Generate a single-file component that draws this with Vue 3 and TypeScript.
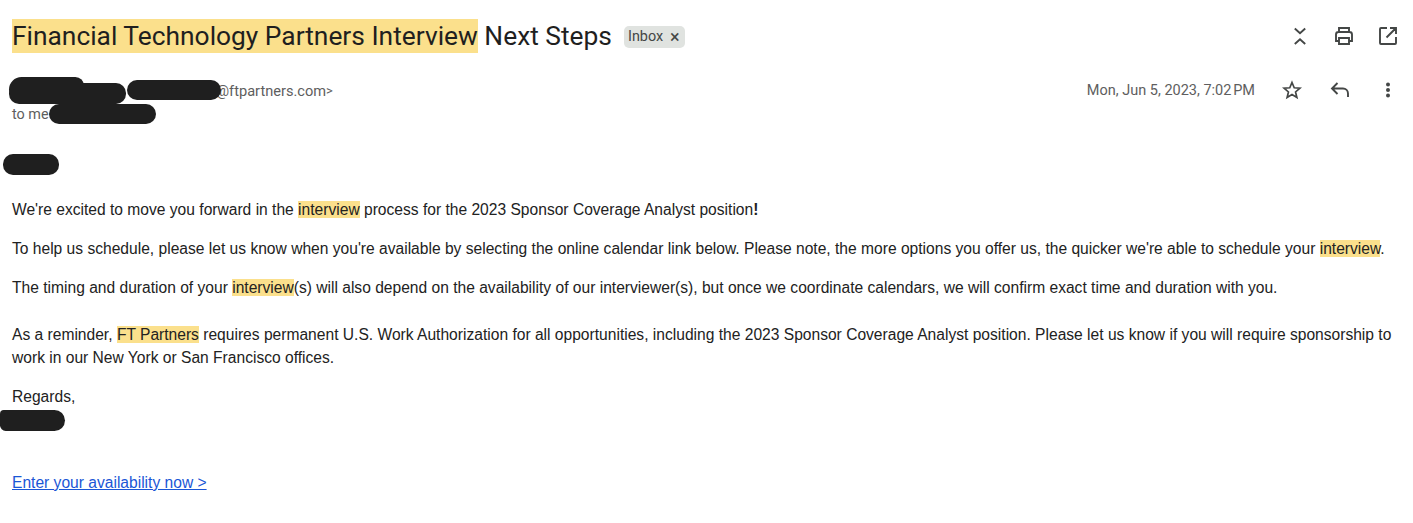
<script setup lang="ts">
const blots = [
  { left: 9, top: 77, width: 75, height: 24, radius: '13px 9px 10px 12px' },
  { left: 9, top: 83, width: 117, height: 21, radius: '10px' },
  { left: 127, top: 80, width: 94, height: 20, radius: '10px' },
  { left: 49, top: 104, width: 107, height: 20, radius: '10px' },
  { left: 3, top: 154, width: 56, height: 21, radius: '10px' },
  { left: 0, top: 410, width: 65, height: 21, radius: '4px 11px 11px 6px' },
];
</script>

<template>
  <div class="page">
    <header class="subject-row">
      <h1 class="subject"><mark class="hl title-hl">Financial Technology Partners Interview</mark> Next Steps</h1>
      <span class="chip">Inbox <span class="chip-x">×</span></span>
      <div class="tools top-tools">
        <svg class="icon" viewBox="0 0 24 24"><path d="M6.800 4.500 12 9.200l5.200-4.700M6.800 20 12 15.300l5.200 4.700" /></svg>
        <svg class="icon" viewBox="0 0 24 24"><path d="M7 8V4h10v4M7 17H4v-6.500A2.500 2.500 0 0 1 6.500 8h11a2.500 2.500 0 0 1 2.500 2.500V17h-3M7 14h10v6H7z" /></svg>
        <svg class="icon" viewBox="0 0 24 24"><path d="M11 4H5a1 1 0 0 0-1 1v14a1 1 0 0 0 1 1h14a1 1 0 0 0 1-1v-6M14 4h6v6M20 4l-9.500 9.500" /></svg>
      </div>
    </header>

    <section class="meta-row">
      <div class="sender">
        <div class="from"><span class="addr">@ftpartners.com</span><span class="gt">&gt;</span></div>
        <div class="to">to me</div>
      </div>
      <time class="date">Mon, Jun 5, 2023, 7:02&#8239;PM</time>
      <div class="tools meta-tools">
        <svg class="icon" viewBox="-1.500 -1.500 27 27"><path d="m12 3.600 2.500 5.900 6.400.5-4.900 4.200 1.500 6.200-5.500-3.300-5.500 3.300L8 14.200 3.100 10l6.400-.5z" /></svg>
        <svg class="icon" viewBox="0 0 24 24"><path d="M9.500 5 4 10.500 9.500 16M4 10.500h11a5 5 0 0 1 5 5V19" /></svg>
        <svg class="icon dots" viewBox="0 0 24 24"><circle cx="12" cy="6.500" r="2" /><circle cx="12" cy="12" r="2" /><circle cx="12" cy="17.500" r="2" /></svg>
      </div>
    </section>

    <main class="body">
      <p>We're excited to move you forward in the <mark class="hl">interview</mark> process for the 2023 Sponsor Coverage Analyst position<b class="bang">!</b></p>
      <p>To help us schedule, please let us know when you're available by selecting the online calendar link below. Please note, the more options you offer us, the quicker we're able to schedule your <mark class="hl">interview</mark>.</p>
      <p>The timing and duration of your <mark class="hl">interview</mark>(s) will also depend on the availability of our interviewer(s), but once we coordinate calendars, we will confirm exact time and duration with you.</p>
      <p class="reminder">As a reminder, <mark class="hl">FT Partners</mark> requires permanent U.S. Work Authorization for all opportunities, including the 2023 Sponsor Coverage Analyst position. Please let us know if you will require sponsorship to work in our New York or San Francisco offices.</p>
      <p class="regards">Regards,</p>
      <a class="cta" href="#">Enter your availability now &gt;</a>
    </main>

    <i
      v-for="(b, i) in blots"
      :key="i"
      class="blot"
      :style="{ left: b.left + 'px', top: b.top + 'px', width: b.width + 'px', height: b.height + 'px', borderRadius: b.radius }"
    />
  </div>
</template>

<style scoped>
.page {
  position: relative;
  width: 1413px;
  height: 523px;
  overflow: hidden;
  background: #fff;
  box-sizing: border-box;
  padding: 19px 0 0 12px;
  font-family: "Liberation Sans", Arial, sans-serif;
  color: #222;
}
.subject-row {
  display: flex;
  align-items: center;
  height: 34px;
  padding-right: 13px;
}
.subject {
  margin: 0;
  font: 400 26.35px/34px Roboto, "Liberation Sans", sans-serif;
  color: #1f1f1f;
  white-space: nowrap;
}
.hl {
  background: #fbe08c;
  color: inherit;
}
.title-hl {
  display: inline-block;
  height: 34px;
}
.chip {
  margin: 2px 0 0 12px;
  height: 22px;
  padding: 0 5px 0 4px;
  display: flex;
  align-items: center;
  gap: 7px;
  background: #e0e3e0;
  border-radius: 5px;
  font: 400 14.4px/22px Roboto, sans-serif;
  color: #444746;
}
.chip-x {
  font-size: 18px;
}
.tools {
  display: flex;
  margin-left: auto;
}
.top-tools {
  gap: 20px;
}
.meta-tools {
  gap: 24px;
  margin: 0 0 0 25px;
}
.icon {
  width: 24px;
  height: 24px;
  fill: none;
  stroke: #444746;
  stroke-width: 1.900;
  display: block;
}
.dots {
  fill: #444746;
  stroke: none;
}
.meta-row {
  display: flex;
  align-items: flex-start;
  padding: 25px 13px 0 0;
}
.sender {
  flex: 1;
  font: 400 14.4px/20px Roboto, sans-serif;
  color: #5e5e5e;
}
.from {
  padding-left: 204px;
  height: 26px;
  display: flex;
  align-items: center;
}
.addr {
  font-size: 14.6px;
}
.gt {
  font-size: 13px;
}
.to {
  height: 20px;
  padding-top: 1px;
  color: #5e5e5e;
}
.date {
  font: 400 14.5px/26px Roboto, sans-serif;
  color: #5e5e5e;
  white-space: nowrap;
}
.body {
  padding: 73px 0 0 0;
  font-size: 15.6px;
  line-height: 23px;
  color: #222;
}
.body p {
  margin: 0 0 16px;
}
.bang {
  font-weight: 700;
}
.body .reminder {
  margin-top: 24px;
}
.body .regards {
  margin: 0 0 63px;
}
.cta {
  color: #1a56d6;
  text-decoration: underline;
}
.blot {
  position: absolute;
  display: block;
  background: #1f1f1f;
}
</style>
